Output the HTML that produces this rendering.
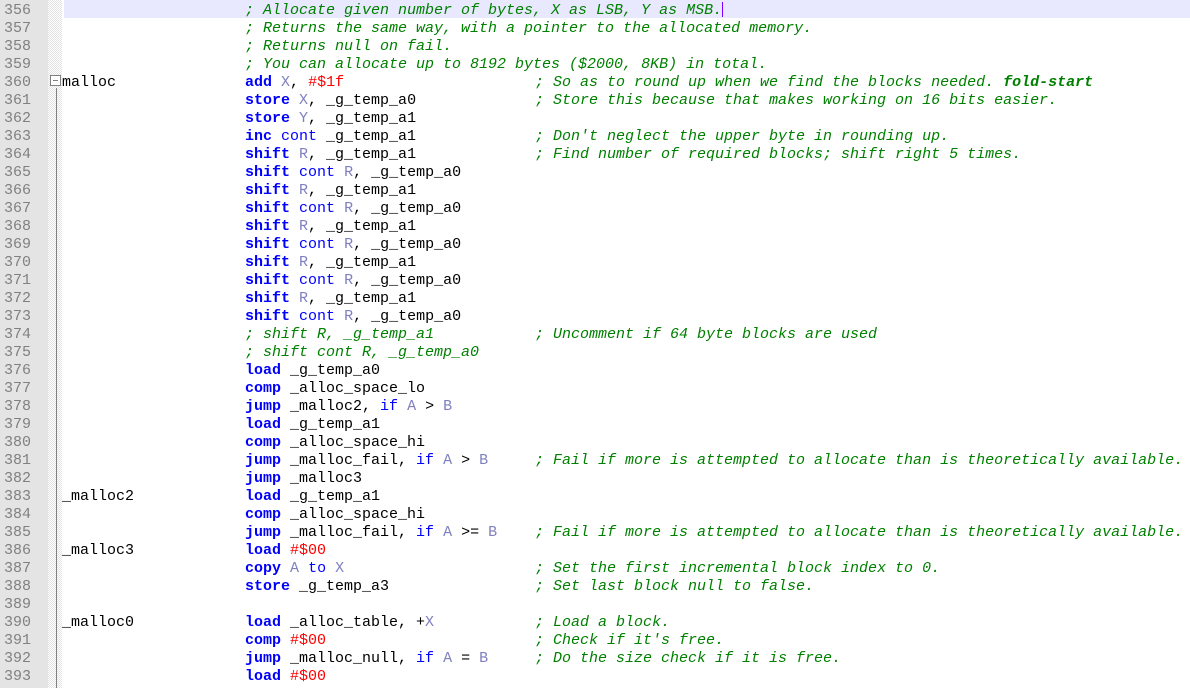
<!DOCTYPE html>
<html><head><meta charset="utf-8"><style>
html,body{margin:0;padding:0;background:#fff;width:1190px;height:688px;overflow:hidden}
body{position:relative;font-family:"Liberation Mono",monospace;font-size:15px}
.g{position:absolute;left:0;top:0;width:48px;height:688px;background:#e4e4e4}
.f{position:absolute;left:48px;top:0;width:14px;height:688px;background-color:#f0f0f0;background-image:repeating-conic-gradient(#fff 0 25%,#e2e2e2 0 50%);background-size:2px 2px}
.hl{position:absolute;left:64px;top:0;width:1126px;height:18px;background:#e8e8ff}
.cur{position:absolute;left:722px;top:2px;width:1px;height:15px;background:#8000ff}
.vl{position:absolute;left:56px;top:88px;width:1px;height:600px;background:#808080}
.box{position:absolute;left:50px;top:75px;width:11px;height:11px;border:1px solid #808080;background:#fff;box-sizing:border-box}
.box:after{content:"";position:absolute;left:2px;top:4px;width:5px;height:1px;background:#808080}
.r{position:absolute;left:0;height:18px;line-height:18px;white-space:pre;width:1190px;margin-top:2px}
.n{position:absolute;left:4px;color:#808080}
.l{position:absolute;left:62px;color:#000}
.i{position:absolute;left:245px;color:#000}
.c{position:absolute;left:535px}
.k{color:#0000ff;font-weight:bold}
.w{color:#0000ff}
.x{color:#8080c0}
.d{color:#ff0000}
.m{color:#008000;font-style:italic}
.b{font-weight:bold}
</style></head><body>
<div class="g"></div><div class="f"></div><div class="hl"></div><div class="vl"></div><div class="box"></div>
<div class="r" style="top:0"><span class="n">356</span><span class="i m">; Allocate given number of bytes, X as LSB, Y as MSB.</span></div>
<div class="cur"></div>
<div class="r" style="top:18px"><span class="n">357</span><span class="i m">; Returns the same way, with a pointer to the allocated memory.</span></div>
<div class="r" style="top:36px"><span class="n">358</span><span class="i m">; Returns null on fail.</span></div>
<div class="r" style="top:54px"><span class="n">359</span><span class="i m">; You can allocate up to 8192 bytes ($2000, 8KB) in total.</span></div>
<div class="r" style="top:72px"><span class="n">360</span><span class="l">malloc</span><span class="i"><span class="k">add</span> <span class="x">X</span>, <span class="d">#$1f</span></span><span class="c m">; So as to round up when we find the blocks needed. <span class="b">fold-start</span></span></div>
<div class="r" style="top:90px"><span class="n">361</span><span class="i"><span class="k">store</span> <span class="x">X</span>, _g_temp_a0</span><span class="c m">; Store this because that makes working on 16 bits easier.</span></div>
<div class="r" style="top:108px"><span class="n">362</span><span class="i"><span class="k">store</span> <span class="x">Y</span>, _g_temp_a1</span></div>
<div class="r" style="top:126px"><span class="n">363</span><span class="i"><span class="k">inc</span> <span class="w">cont</span> _g_temp_a1</span><span class="c m">; Don't neglect the upper byte in rounding up.</span></div>
<div class="r" style="top:144px"><span class="n">364</span><span class="i"><span class="k">shift</span> <span class="x">R</span>, _g_temp_a1</span><span class="c m">; Find number of required blocks; shift right 5 times.</span></div>
<div class="r" style="top:162px"><span class="n">365</span><span class="i"><span class="k">shift</span> <span class="w">cont</span> <span class="x">R</span>, _g_temp_a0</span></div>
<div class="r" style="top:180px"><span class="n">366</span><span class="i"><span class="k">shift</span> <span class="x">R</span>, _g_temp_a1</span></div>
<div class="r" style="top:198px"><span class="n">367</span><span class="i"><span class="k">shift</span> <span class="w">cont</span> <span class="x">R</span>, _g_temp_a0</span></div>
<div class="r" style="top:216px"><span class="n">368</span><span class="i"><span class="k">shift</span> <span class="x">R</span>, _g_temp_a1</span></div>
<div class="r" style="top:234px"><span class="n">369</span><span class="i"><span class="k">shift</span> <span class="w">cont</span> <span class="x">R</span>, _g_temp_a0</span></div>
<div class="r" style="top:252px"><span class="n">370</span><span class="i"><span class="k">shift</span> <span class="x">R</span>, _g_temp_a1</span></div>
<div class="r" style="top:270px"><span class="n">371</span><span class="i"><span class="k">shift</span> <span class="w">cont</span> <span class="x">R</span>, _g_temp_a0</span></div>
<div class="r" style="top:288px"><span class="n">372</span><span class="i"><span class="k">shift</span> <span class="x">R</span>, _g_temp_a1</span></div>
<div class="r" style="top:306px"><span class="n">373</span><span class="i"><span class="k">shift</span> <span class="w">cont</span> <span class="x">R</span>, _g_temp_a0</span></div>
<div class="r" style="top:324px"><span class="n">374</span><span class="i m">; shift R, _g_temp_a1</span><span class="c m">; Uncomment if 64 byte blocks are used</span></div>
<div class="r" style="top:342px"><span class="n">375</span><span class="i m">; shift cont R, _g_temp_a0</span></div>
<div class="r" style="top:360px"><span class="n">376</span><span class="i"><span class="k">load</span> _g_temp_a0</span></div>
<div class="r" style="top:378px"><span class="n">377</span><span class="i"><span class="k">comp</span> _alloc_space_lo</span></div>
<div class="r" style="top:396px"><span class="n">378</span><span class="i"><span class="k">jump</span> _malloc2, <span class="w">if</span> <span class="x">A</span> &gt; <span class="x">B</span></span></div>
<div class="r" style="top:414px"><span class="n">379</span><span class="i"><span class="k">load</span> _g_temp_a1</span></div>
<div class="r" style="top:432px"><span class="n">380</span><span class="i"><span class="k">comp</span> _alloc_space_hi</span></div>
<div class="r" style="top:450px"><span class="n">381</span><span class="i"><span class="k">jump</span> _malloc_fail, <span class="w">if</span> <span class="x">A</span> &gt; <span class="x">B</span></span><span class="c m">; Fail if more is attempted to allocate than is theoretically available.</span></div>
<div class="r" style="top:468px"><span class="n">382</span><span class="i"><span class="k">jump</span> _malloc3</span></div>
<div class="r" style="top:486px"><span class="n">383</span><span class="l">_malloc2</span><span class="i"><span class="k">load</span> _g_temp_a1</span></div>
<div class="r" style="top:504px"><span class="n">384</span><span class="i"><span class="k">comp</span> _alloc_space_hi</span></div>
<div class="r" style="top:522px"><span class="n">385</span><span class="i"><span class="k">jump</span> _malloc_fail, <span class="w">if</span> <span class="x">A</span> &gt;= <span class="x">B</span></span><span class="c m">; Fail if more is attempted to allocate than is theoretically available.</span></div>
<div class="r" style="top:540px"><span class="n">386</span><span class="l">_malloc3</span><span class="i"><span class="k">load</span> <span class="d">#$00</span></span></div>
<div class="r" style="top:558px"><span class="n">387</span><span class="i"><span class="k">copy</span> <span class="x">A</span> <span class="w">to</span> <span class="x">X</span></span><span class="c m">; Set the first incremental block index to 0.</span></div>
<div class="r" style="top:576px"><span class="n">388</span><span class="i"><span class="k">store</span> _g_temp_a3</span><span class="c m">; Set last block null to false.</span></div>
<div class="r" style="top:594px"><span class="n">389</span></div>
<div class="r" style="top:612px"><span class="n">390</span><span class="l">_malloc0</span><span class="i"><span class="k">load</span> _alloc_table, +<span class="x">X</span></span><span class="c m">; Load a block.</span></div>
<div class="r" style="top:630px"><span class="n">391</span><span class="i"><span class="k">comp</span> <span class="d">#$00</span></span><span class="c m">; Check if it's free.</span></div>
<div class="r" style="top:648px"><span class="n">392</span><span class="i"><span class="k">jump</span> _malloc_null, <span class="w">if</span> <span class="x">A</span> = <span class="x">B</span></span><span class="c m">; Do the size check if it is free.</span></div>
<div class="r" style="top:666px"><span class="n">393</span><span class="i"><span class="k">load</span> <span class="d">#$00</span></span></div>
</body></html>
